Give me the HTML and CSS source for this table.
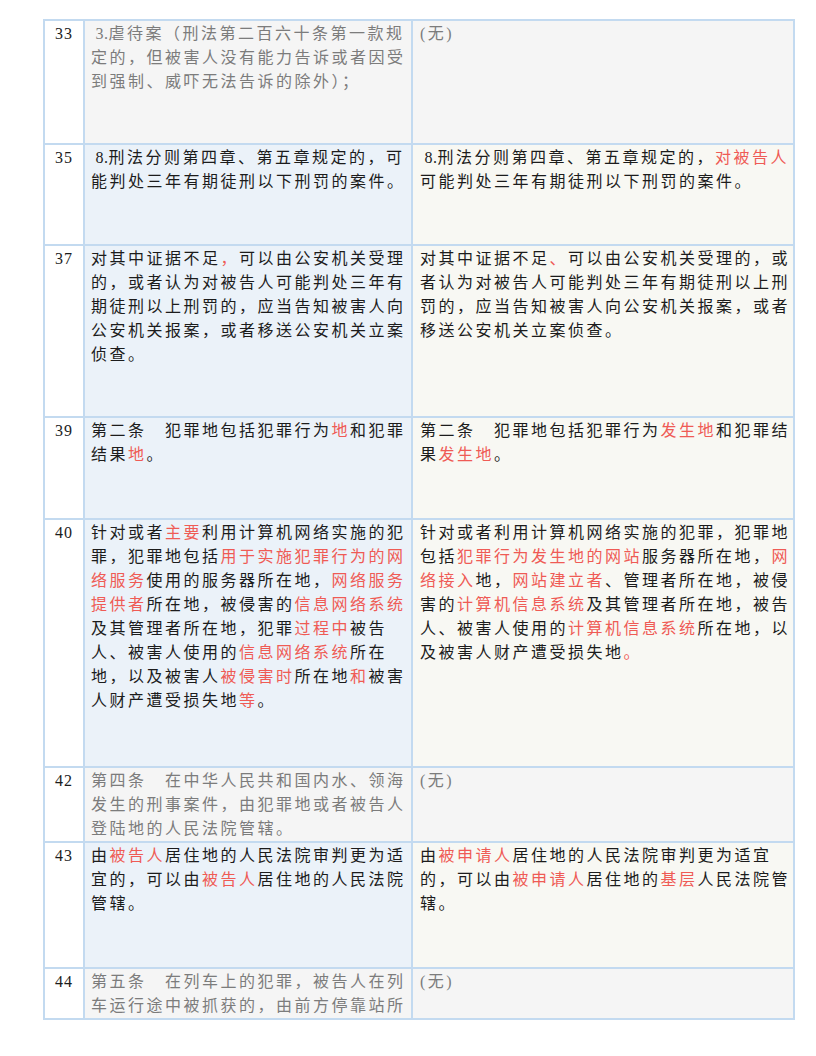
FILE: index.html
```html
<!DOCTYPE html>
<html lang="zh-CN">
<head>
<meta charset="utf-8">
<title>对照表</title>
<link rel="stylesheet" href="styles.css">
</head>
<body>
<div class="sheet">
  <div class="num">33</div>
  <div class="cell old del"><span class="lat">&nbsp;3.</span>虐待案（刑法第二百六十条第一款规定的，但被害人没有能力告诉或者因受到强制、威吓无法告诉的除外）；</div>
  <div class="cell new none">(无)</div>

  <div class="num">35</div>
  <div class="cell old"><span class="lat">&nbsp;8.</span>刑法分则第四章、第五章规定的，可能判处三年有期徒刑以下刑罚的案件。</div>
  <div class="cell new"><span class="lat">&nbsp;8.</span>刑法分则第四章、第五章规定的，<span class="hl">对被告人</span>可能判处三年有期徒刑以下刑罚的案件。</div>

  <div class="num">37</div>
  <div class="cell old">对其中证据不足<span class="hl">，</span>可以由公安机关受理的，或者认为对被告人可能判处三年有期徒刑以上刑罚的，应当告知被害人向公安机关报案，或者移送公安机关立案侦查。</div>
  <div class="cell new">对其中证据不足<span class="hl">、</span>可以由公安机关受理的，或者认为对被告人可能判处三年有期徒刑以上刑罚的，应当告知被害人向公安机关报案，或者移送公安机关立案侦查。</div>

  <div class="num">39</div>
  <div class="cell old">第二条　犯罪地包括犯罪行为<span class="hl">地</span>和犯罪结果<span class="hl">地</span>。</div>
  <div class="cell new">第二条　犯罪地包括犯罪行为<span class="hl">发生地</span>和犯罪结果<span class="hl">发生地</span>。</div>

  <div class="num">40</div>
  <div class="cell old">针对或者<span class="hl">主要</span>利用计算机网络实施的犯罪，犯罪地包括<span class="hl">用于实施犯罪行为的网络服务</span>使用的服务器所在地，<span class="hl">网络服务提供者</span>所在地，被侵害的<span class="hl">信息网络系统</span>及其管理者所在地，犯罪<span class="hl">过程中</span>被告人、被害人使用的<span class="hl">信息网络系统</span>所在地，以及被害人<span class="hl">被侵害时</span>所在地<span class="hl">和</span>被害人财产遭受损失地<span class="hl">等</span>。</div>
  <div class="cell new">针对或者利用计算机网络实施的犯罪，犯罪地包括<span class="hl">犯罪行为发生地的网站</span>服务器所在地，<span class="hl">网络接入</span>地，<span class="hl">网站建立者</span>、管理者所在地，被侵害的<span class="hl">计算机信息系统</span>及其管理者所在地，被告人、被害人使用的<span class="hl">计算机信息系统</span>所在地，以及被害人财产遭受损失地<span class="hl">。</span></div>

  <div class="num">42</div>
  <div class="cell old del">第四条　在中华人民共和国内水、领海发生的刑事案件，由犯罪地或者被告人登陆地的人民法院管辖。</div>
  <div class="cell new none">(无)</div>

  <div class="num">43</div>
  <div class="cell old">由<span class="hl">被告人</span>居住地的人民法院审判更为适宜的，可以由<span class="hl">被告人</span>居住地的人民法院管辖。</div>
  <div class="cell new">由<span class="hl">被申请人</span>居住地的人民法院审判更为适宜的，可以由<span class="hl">被申请人</span>居住地的<span class="hl">基层</span>人民法院管辖。</div>

  <div class="num">44</div>
  <div class="cell old del">第五条　在列车上的犯罪，被告人在列车运行途中被抓获的，由前方停靠站所</div>
  <div class="cell new none">(无)</div>
</div>
</body>
</html>
```

FILE: styles.css
```css
html, body {
  margin: 0;
  padding: 0;
  background: #ffffff;
}

body {
  font-family: "Liberation Serif", "Noto Sans CJK SC", serif;
  font-size: 16px;
  line-height: 24px;
  color: #1c1c1c;
}

.sheet {
  display: grid;
  grid-template-columns: 38px 326px 380px;
  grid-template-rows: 122px 99px 170px 100px 246px 73px 124px 49px;
  gap: 2px;
  padding: 2px;
  width: max-content;
  margin: 19px 0 0 43px;
  background: #c3daf0;
}

.num {
  background: #ffffff;
  text-align: center;
  padding-top: 1px;
  letter-spacing: 1px;
  color: #1c1c1c;
}

.cell {
  overflow: hidden;
  padding-top: 1px;
  letter-spacing: 2.5px;
  word-break: break-all;
}

.old {
  background: #ebf2f9;
  padding-left: 6px;
  padding-right: 0;
}

.new {
  background: #f8f8f3;
  padding-left: 7px;
  padding-right: 0;
}

.old.del,
.new.none {
  background: #f5f5f5;
  color: #7c7c7c;
}

.lat {
  letter-spacing: 0.5px;
}

.hl {
  color: #ef5b55;
}
```
